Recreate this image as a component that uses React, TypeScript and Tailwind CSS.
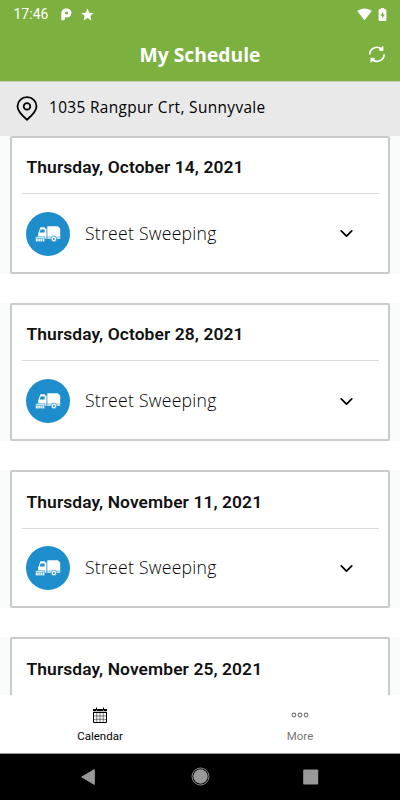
import { ChevronDown } from 'lucide-react';

interface Pickup {
  date: string;
  service?: string;
}

const PICKUPS: Pickup[] = [
  { date: 'Thursday, October 14, 2021', service: 'Street Sweeping' },
  { date: 'Thursday, October 28, 2021', service: 'Street Sweeping' },
  { date: 'Thursday, November 11, 2021', service: 'Street Sweeping' },
  { date: 'Thursday, November 25, 2021' },
];

export default function App() {
  return (
    <div className="flex h-[800px] w-[400px] flex-col overflow-hidden bg-white font-['Open_Sans',sans-serif] text-black">
      <StatusBar />
      <Header />
      <AddressBar />

      {/* Schedule */}
      <main className="flex min-h-0 flex-1 flex-col gap-[29.25px] overflow-hidden">
        {PICKUPS.map((pickup) => (
          <PickupCard key={pickup.date} pickup={pickup} />
        ))}
      </main>

      <TabBar />
      <SystemNav />
    </div>
  );
}

function StatusBar() {
  return (
    <div className="flex h-7 shrink-0 items-center bg-[#7cb03f] pr-[13px] pl-[13.5px] text-white">
      <span className="w-[47px] font-[Roboto,sans-serif] text-[14px] leading-none">17:46</span>
      <svg width="11" height="13" viewBox="0 0 11 13" className="shrink-0">
        <path
          fill="currentColor"
          fillRule="evenodd"
          d="M.3 5.2C.3 2.3 2.5.5 5.5.5s5 1.9 5 4.5-1.9 4.5-4.5 4.5c-.8 0-1.4-.2-1.9-.4v1.2c0 1.3-.7 2-1.9 2H.3zM5.6 3.4a1.6 1.6 0 1 0 0 3.2 1.6 1.6 0 0 0 0-3.2z"
        />
      </svg>
      <svg width="13" height="13" viewBox="0 0 24 24" fill="currentColor" className="ml-[9.5px]">
        <path d="m12 1 3.3 7.6 8.2.7-6.2 5.5 1.9 8.1-7.2-4.3-7.2 4.3 1.9-8.1L.5 9.3l8.2-.7z" />
      </svg>
      <svg width="15" height="13" viewBox="0 0 15 13" fill="currentColor" className="ml-auto">
        <path d="M7.5 12.3.2 3.1C4.2-.4 10.8-.4 14.8 3.1z" />
      </svg>
      <svg width="9" height="13" viewBox="0 0 9 13" className="ml-[6px]">
        <path d="M2.8 0h3.4v1.3h1.3q.9 0 .9.9v9.9q0 .9-.9.9h-6q-.9 0-.9-.9V2.2q0-.9.9-.9h1.3z" fill="currentColor" />
        <path d="M5.2 3.6 2.5 7.7h1.7v3.1l2.5-4.3H5.2z" fill="#7cb03f" />
      </svg>
    </div>
  );
}

function Header() {
  return (
    <header className="relative flex h-[53px] shrink-0 items-center justify-center bg-[#7cb03f] text-white">
      <h1 className="text-[19.3px] leading-none font-bold">My Schedule</h1>
      <button className="absolute top-[17px] right-[14px]" aria-label="Refresh">
        <svg width="18" height="19" viewBox="0 0 18 19" fill="none" stroke="currentColor" strokeWidth="1.7">
          <path d="M1.7 9.4a7.1 7.1 0 0 1 11.9-5.2M16.1 9.3a7.1 7.1 0 0 1-11.9 5.2" />
          <path d="M11.1 5.1 14.9 1.5v4.2zM6.7 13.6l-3.8 3.6V13z" fill="currentColor" strokeWidth=".9" />
        </svg>
      </button>
    </header>
  );
}

function AddressBar() {
  return (
    <div className="flex h-[54.5px] shrink-0 items-center border-t border-[#c9d3bc] bg-[#e9e9e9] pl-4">
      <svg width="22" height="25" viewBox="0 0 22 25" fill="none" stroke="currentColor" strokeWidth="1.8" strokeLinejoin="round">
        <path d="M11 23.7C8.2 21.3 1.5 16 1.5 10.3 1.5 5.1 5.7 1.2 11 1.2s9.5 3.9 9.5 9.1c0 5.7-6.7 11-9.5 13.4z" />
        <circle cx="11" cy="10.4" r="3.3" />
      </svg>
      <span className="ml-[11px] pb-[2px] text-[15.4px] leading-none tracking-[0.36px]">1035 Rangpur Crt, Sunnyvale</span>
    </div>
  );
}

function PickupCard({ pickup }: { pickup: Pickup }) {
  return (
    <div className="shrink-0 bg-[#f9fbfa] px-2.5">
      <section className="flex h-[138px] flex-col rounded-[2px] border-2 border-[#c9cbca] bg-white px-[9.5px]">
        <div className="flex h-[55.5px] shrink-0 items-center px-[5px] pt-[5px]">
          <h2 className="font-[Roboto,sans-serif] text-[17.4px] leading-none font-semibold tracking-[0.1px] text-[#111]">
            {pickup.date}
          </h2>
        </div>
        {pickup.service && (
          <div className="flex flex-1 items-center border-t border-[#d9d9d9] pt-[2px] pr-[22px] pl-[4.75px]">
            <span className="flex size-11 items-center justify-center rounded-full bg-[#1e8dcc]">
              <SweeperIcon />
            </span>
            <span className="ml-[14.75px] text-[17.6px] leading-none font-light tracking-[0.26px]">{pickup.service}</span>
            <ChevronDown size={21} strokeWidth={2} className="ml-auto" />
          </div>
        )}
      </section>
    </div>
  );
}

function SweeperIcon() {
  return (
    <svg width="26" height="18" viewBox="0 0 26 18">
      <path d="M12.3 1.2h10.5l2.4 2.4v10.2H12.3z" fill="#fff" />
      <path d="M5.6 2.2H10v1.2h1.5v10.4H3.1V8.6L5 3.6z" fill="#fff" />
      <path d="M5.7 4.6h3.9v3H4.6z" fill="#1e8dcc" />
      <path d="M11.4 12.1h13.8" stroke="#1e8dcc" strokeWidth=".6" />
      <path d="M.5 11.7h9.2v5H.5z" fill="#fff" stroke="#1e8dcc" strokeWidth=".6" />
      <path d="M1 13.3h8.4M3 13.5v3M5.2 13.5v3M7.4 13.5v3" stroke="#1e8dcc" strokeWidth=".6" />
      <circle cx="18.9" cy="13.9" r="2.8" fill="#fff" stroke="#1e8dcc" strokeWidth=".7" />
      <circle cx="18.9" cy="13.9" r="1" fill="#1e8dcc" />
    </svg>
  );
}

function TabBar() {
  return (
    <nav className="grid h-[58.5px] shrink-0 grid-cols-2 border-b border-[#999] bg-white font-[Roboto,sans-serif] text-[11.5px] leading-none">
      <button className="flex flex-col items-center pt-[12px]">
        <svg width="16" height="17" viewBox="0 0 16 17" fill="none" stroke="currentColor">
          <path d="M1.5 5v10.5h13V5" />
          <path d="M1 2h3v1.5h1.2V2h5.6v1.5H12V2h3v2.3H1z" fill="currentColor" stroke="none" />
          <path d="M1 5.5h14" />
          <path d="M4.5.5v2.5M11.5.5v2.5" />
          <path d="M4.8 5v10.5M8 5v10.5M11.2 5v10.5M2 9h12M2 12.3h12" strokeWidth=".5" />
        </svg>
        <span className="mt-[7px]">Calendar</span>
      </button>
      <button className="flex flex-col items-center pt-[12px] text-[#777]">
        <svg width="18" height="17" viewBox="0 0 18 17" fill="none" stroke="currentColor" strokeWidth="1.1">
          <circle cx="2.9" cy="8" r="1.9" />
          <circle cx="9" cy="8" r="1.9" />
          <circle cx="15.1" cy="8" r="1.9" />
        </svg>
        <span className="mt-[7px]">More</span>
      </button>
    </nav>
  );
}

function SystemNav() {
  return (
    <div className="flex h-[46.5px] shrink-0 items-center justify-between bg-black px-[80px] text-[#999]">
      <svg width="16" height="18" viewBox="0 0 16 18" fill="currentColor">
        <path d="M14.3 1.6v14.8L1.7 9z" stroke="currentColor" strokeLinejoin="round" />
      </svg>
      <svg width="19" height="19" viewBox="0 0 19 19" className="ml-0.5">
        <circle cx="9.5" cy="9.5" r="8.5" fill="none" stroke="currentColor" strokeWidth=".9" />
        <circle cx="9.5" cy="9.5" r="7.2" fill="currentColor" />
      </svg>
      <svg width="18" height="18" viewBox="0 0 18 18" fill="currentColor">
        <rect x="1.2" y="1.5" width="15" height="15" rx="1" />
      </svg>
    </div>
  );
}
